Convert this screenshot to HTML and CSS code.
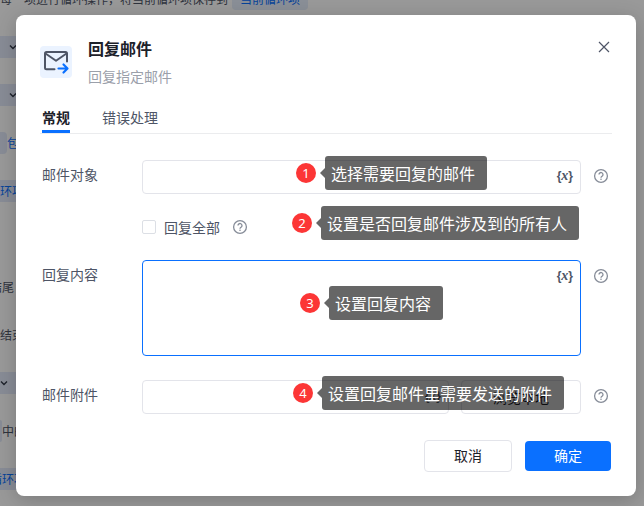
FILE: index.html
```html
<!DOCTYPE html>
<html lang="zh-CN">
<head>
<meta charset="utf-8">
<meta name="viewport" content="width=device-width, initial-scale=1">
<title>回复邮件</title>
<link rel="stylesheet" href="styles.css">
</head>
<body>
<svg class="sprite" aria-hidden="true">
  <symbol id="i-help" viewBox="0 0 16 16">
    <circle cx="8" cy="8" r="6.4" fill="none" stroke="currentColor" stroke-width="1.3"/>
    <path d="M6 6.6a2 2 0 1 1 3.1 1.6c-.7.5-1.1.7-1.1 1.5" fill="none" stroke="currentColor" stroke-width="1.3"/>
    <circle cx="8" cy="11.3" r=".8" fill="currentColor"/>
  </symbol>
  <symbol id="i-down" viewBox="0 0 8 8">
    <path d="M1 2.5l3 3 3-3" fill="none" stroke="currentColor" stroke-width="1.4"/>
  </symbol>
</svg>

<div class="flow" aria-hidden="true">
  <div class="step"><span>每一项进行循环操作，将当前循环项保存到</span><span class="chip">当前循环项</span></div>
  <div class="step"><span class="band pick"><svg><use href="#i-down"/></svg></span></div>
  <div class="step"><span class="band pick"><svg><use href="#i-down"/></svg></span></div>
  <div class="step"><span class="stub"></span><span class="link">包</span></div>
  <div class="step"><span class="band link">环项</span></div>
  <div class="step"></div>
  <div class="step"><span class="cut">结尾</span></div>
  <div class="step"><span>结束</span></div>
  <div class="step"><span class="band"><svg><use href="#i-down"/></svg></span></div>
  <div class="step"><span class="stub narrow"></span><span>中的</span></div>
  <div class="step"><span class="band link"><span class="cut">循环项</span></span></div>
</div>

<div class="overlay">
  <form class="dialog" role="dialog" aria-labelledby="title">
    <header class="head">
      <svg class="logo" viewBox="0 0 32 32" aria-hidden="true">
        <rect width="32" height="32" rx="4" fill="#ebf3ff"/>
        <path d="M14.5 23.2H6.5a1.5 1.5 0 0 1-1.500-1.500V7.500A1.500 1.500 0 0 1 6.500 6H25.500A1.500 1.500 0 0 1 27 7.500V15.500" fill="none" stroke="#4e5566" stroke-width="2" stroke-linecap="round"/>
        <path d="M5.500 7.500l10.500 7.200 10.500-7.200" fill="none" stroke="#4e5566" stroke-width="2" stroke-linejoin="round"/>
        <path d="M18.500 22.500h8.500M23.500 18.500l4 4-4 4" fill="none" stroke="#0a70ff" stroke-width="2.200" stroke-linecap="round" stroke-linejoin="round"/>
      </svg>
      <div class="names">
        <h1 id="title">回复邮件</h1>
        <p>回复指定邮件</p>
      </div>
      <button class="close" type="button" aria-label="关闭">
        <svg viewBox="0 0 16 16"><path d="M3 3l10 10M13 3L3 13" stroke="currentColor" stroke-width="1.200"/></svg>
      </button>
    </header>

    <nav class="tabs">
      <button class="tab active" type="button">常规</button>
      <button class="tab" type="button">错误处理</button>
    </nav>

    <div class="fields">
      <div class="row">
        <label for="target">邮件对象</label>
        <div class="control">
          <input id="target" class="box" type="text">
          <button class="var" type="button">{<i>x</i>}</button>
          <div class="note note-target"><b>1</b><span>选择需要回复的邮件</span></div>
        </div>
        <svg class="help"><use href="#i-help"/></svg>
      </div>

      <div class="row row-check">
        <div class="control check">
          <input id="all" type="checkbox">
          <label for="all">回复全部</label>
          <svg class="help"><use href="#i-help"/></svg>
          <div class="note note-all"><b>2</b><span>设置是否回复邮件涉及到的所有人</span></div>
        </div>
      </div>

      <div class="row">
        <label for="content">回复内容</label>
        <div class="control">
          <textarea id="content" class="box focus"></textarea>
          <button class="var" type="button">{<i>x</i>}</button>
          <div class="note note-content"><b>3</b><span>设置回复内容</span></div>
        </div>
        <svg class="help"><use href="#i-help"/></svg>
      </div>

      <div class="row">
        <label for="files">邮件附件</label>
        <div class="control pair">
          <div class="control">
            <input id="files" class="box" type="text">
            <button class="var" type="button">{<i>x</i>}</button>
          </div>
          <button class="box browse" type="button">浏览本地</button>
          <div class="note note-files"><b>4</b><span>设置回复邮件里需要发送的附件</span></div>
        </div>
        <svg class="help"><use href="#i-help"/></svg>
      </div>
    </div>

    <footer class="actions">
      <button class="btn" type="button">取消</button>
      <button class="btn primary" type="submit">确定</button>
    </footer>
  </form>
</div>
</body>
</html>
```
FILE: styles.css
```css
* {
  box-sizing: border-box;
}

body {
  margin: 0;
  min-height: 100vh;
  overflow: hidden;
  background: #fff;
  color: #4e5566;
  font: 14px/20px "Noto Sans CJK SC", sans-serif;
}

button,
input,
textarea {
  margin: 0;
  padding: 0;
  border: 0;
  background: none;
  color: inherit;
  font: inherit;
}

.sprite {
  position: absolute;
  width: 0;
  height: 0;
}

/* Workflow list behind the dialog */
.flow {
  position: absolute;
  inset: -25px 0 0;
  overflow: hidden;
  font-size: 12px;
  line-height: 22px;
}

.step {
  display: flex;
  align-items: center;
  height: 48px;
  white-space: nowrap;
}

.step svg {
  width: 8px;
  height: 8px;
  color: #333a4a;
}

.chip {
  margin-left: 4px;
  padding: 0 8px;
  border-radius: 4px;
  background: #e6eefc;
  color: #0a70ff;
}

.band {
  display: flex;
  align-items: center;
  width: 120px;
  height: 22px;
  background: #e3eafa;
}

.pick {
  padding-left: 9px;
}

.link {
  color: #0a70ff;
}

.stub {
  width: 7px;
  height: 22px;
  border-radius: 0 4px 4px 0;
  background: #e3eafa;
}

.narrow {
  width: 2px;
}

.cut {
  margin-left: -10px;
}

/* Dialog */
.overlay {
  position: relative;
  min-height: 100vh;
  padding: 15px 8px 10px 16px;
  background: rgba(0, 0, 0, 0.4);
}

.dialog {
  padding: 24px;
  border-radius: 8px;
  background: #fff;
  box-shadow: 0 4px 20px rgba(0, 0, 0, 0.2);
}

.head {
  display: flex;
  align-items: center;
  gap: 16px;
  height: 46px;
}

.logo {
  width: 32px;
  height: 32px;
}

.names {
  flex: 1;
}

h1 {
  margin: 0 0 8px;
  color: #1d2129;
  font-size: 16px;
  line-height: 20px;
  font-weight: 700;
}

.names p {
  margin: 0;
  color: #9ba0aa;
}

.close {
  align-self: flex-start;
  width: 16px;
  height: 16px;
}

.close svg {
  display: block;
}

.tabs {
  display: flex;
  gap: 32px;
  margin-top: 22px;
  padding-left: 2px;
  border-bottom: 1px solid #ebecee;
}

.tab {
  height: 26px;
  padding-bottom: 5px;
  border-bottom: 3px solid transparent;
}

.active {
  border-color: #0a70ff;
  color: #1d2129;
  font-weight: 700;
}

.fields {
  display: grid;
  gap: 24px;
  padding: 26px 3px 26px 2px;
}

.row {
  display: grid;
  grid-template-columns: 100px 1fr 28px;
  align-items: start;
}

.row > label {
  padding-top: 4px;
}

.row > .help {
  margin: 8px 0 0 12px;
}

.help {
  width: 16px;
  height: 16px;
  color: #868c98;
}

.control {
  position: relative;
}

.box {
  display: block;
  width: 100%;
  height: 34px;
  padding: 0 32px 0 10px;
  border: 1px solid #e3e4ea;
  border-radius: 4px;
  outline: 0;
}

textarea.box {
  height: 96px;
  resize: none;
}

.focus {
  border-color: #0a70ff;
}

.var {
  position: absolute;
  top: 7px;
  right: 8px;
  font: 700 12px/18px "Liberation Sans", sans-serif;
}

.var i {
  font-size: 14px;
  font-family: "Liberation Serif", serif;
}

.row-check {
  padding: 2px 0;
}

.row-check .control {
  grid-column: 2;
}

.check {
  display: flex;
  align-items: center;
  height: 14px;
}

.check input {
  width: 14px;
  height: 14px;
  margin-right: 8px;
  border: 1px solid #dcdfe5;
  border-radius: 2px;
  appearance: none;
}

.check label {
  margin-right: 12px;
}

.pair {
  display: grid;
  grid-template-columns: 1fr 120px;
  gap: 12px;
}

.browse {
  padding: 0;
  color: #1d2129;
}

/* Numbered callouts */
.note {
  position: absolute;
  top: -4px;
  display: flex;
  align-items: center;
  gap: 9px;
  color: #fff;
  font-size: 16px;
  line-height: 34px;
  white-space: nowrap;
}

.note b {
  width: 20px;
  height: 20px;
  border-radius: 50%;
  background: #fc3636;
  font: 13px/20px "Noto Sans", sans-serif;
  text-align: center;
}

.note span {
  position: relative;
  padding: 0 12px 0 6px;
  border-radius: 3px;
  background: rgba(0, 0, 0, 0.6);
}

.note span::before {
  content: "";
  position: absolute;
  top: 12px;
  right: 100%;
  border: 5px solid transparent;
  border-right-color: rgba(0, 0, 0, 0.6);
  border-left: 0;
}

.note-target {
  left: 154px;
}

.note-all {
  top: -14px;
  left: 150px;
}

.note-content {
  top: 26px;
  left: 158px;
}

.note-files {
  left: 151px;
}

.actions {
  display: flex;
  justify-content: flex-end;
  align-items: center;
  gap: 13px;
  padding-right: 1px;
}

.btn {
  width: 88px;
  height: 32px;
  padding-bottom: 2px;
  border: 1px solid #e3e4ea;
  border-radius: 4px;
  color: #1d2129;
}

.primary {
  width: 86px;
  height: 30px;
  border: 0;
  background: #0a70ff;
  color: #fff;
}
```
